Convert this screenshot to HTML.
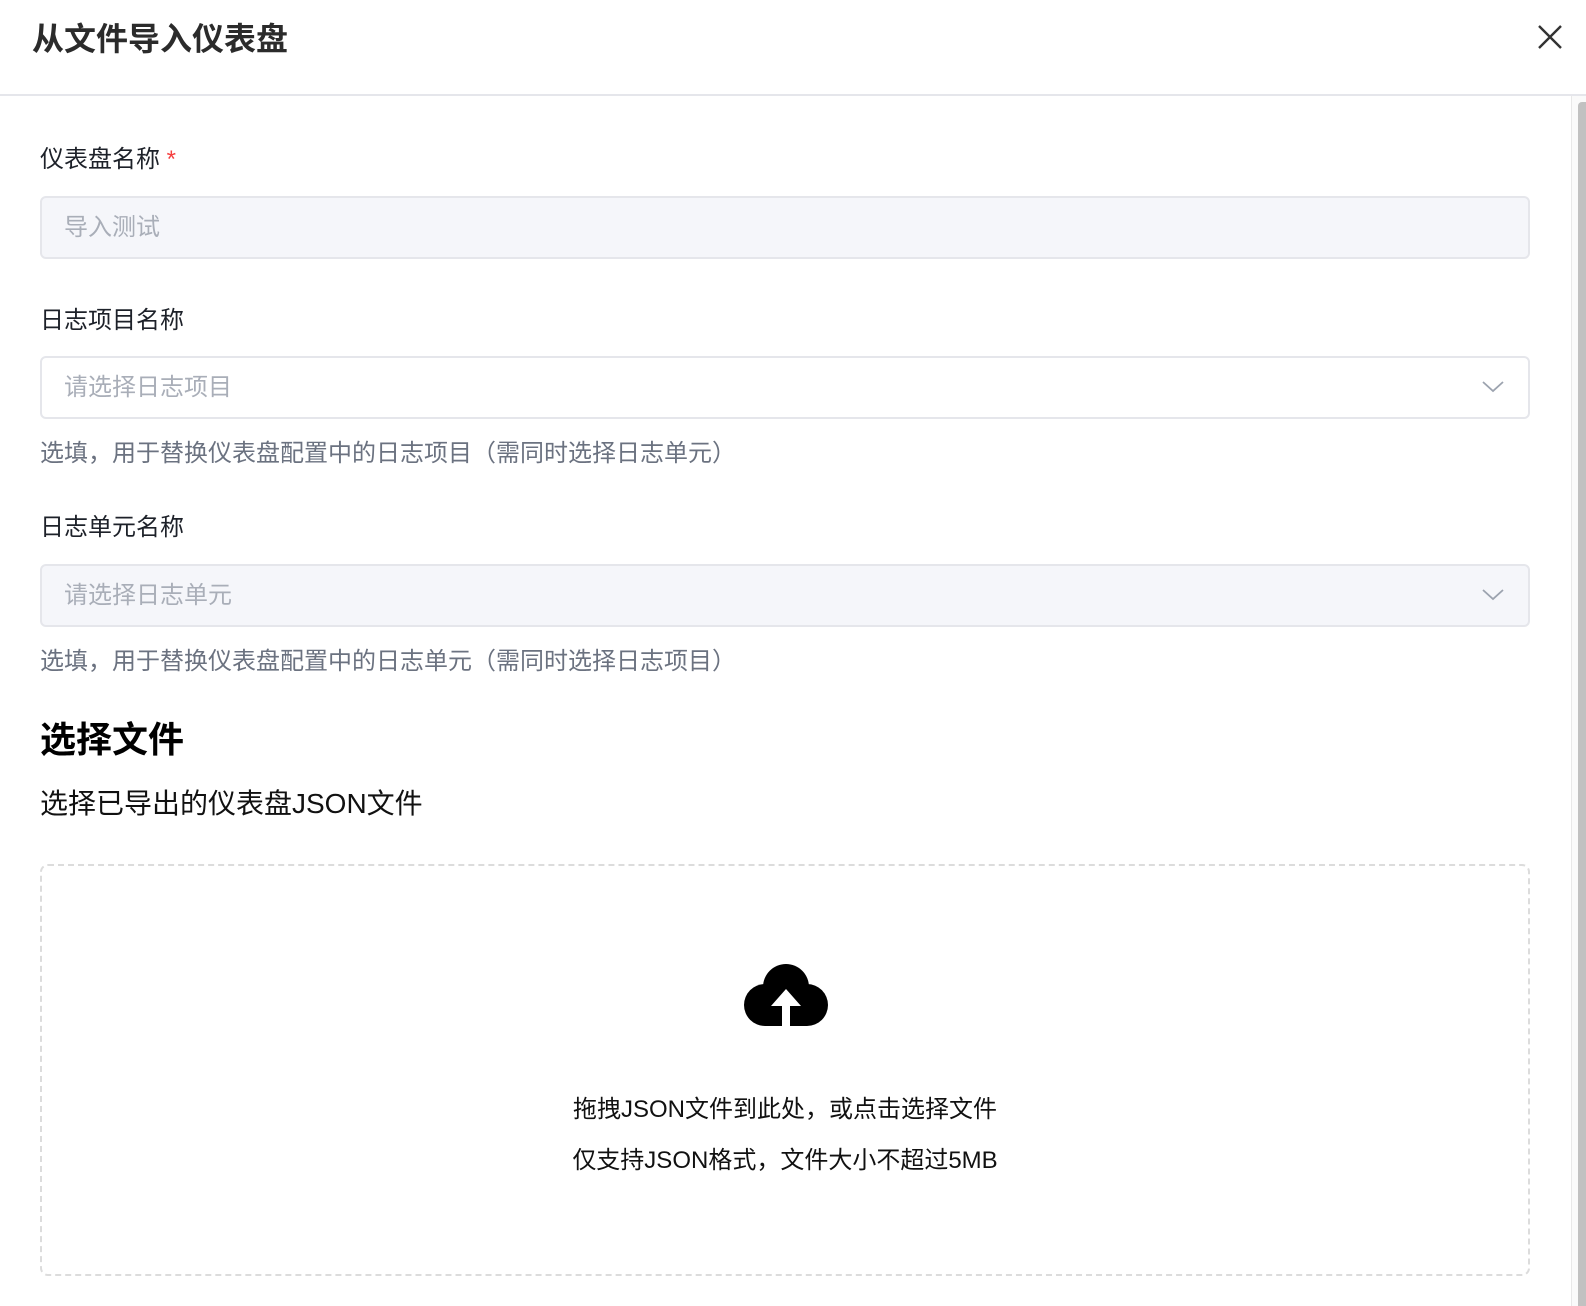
<!DOCTYPE html>
<html><head><meta charset="utf-8"><style>
*{box-sizing:border-box;margin:0;padding:0}
body{width:1586px;height:1306px;overflow:hidden;background:#fff;font-family:"Liberation Sans","Noto Sans CJK SC",sans-serif;position:relative;color:#1d2129}
.abs{position:absolute}
.title{left:32px;top:17px;font-size:32px;font-weight:bold;color:#2b2b2b;line-height:44px}
.hdr{left:0;top:94px;width:1586px;height:2px;background:#e5e6eb}
.sb{left:1571px;top:96px;width:15px;height:1210px;background:#fafafa;border-left:1px solid #e8e8e8}
.thumb{left:1578px;top:102px;width:8px;height:1204px;background:#c1c1c1;border-radius:4px 0 0 0}
.lbl{left:40px;font-size:24px;color:#1d2129;line-height:32px}
.inp{left:40px;width:1490px;height:63px;border:2px solid #e5e6eb;border-radius:6px;font-size:24px;color:#a9aeb8;padding-left:22px;line-height:59px}
.gray{background:#f5f6fa}
.help{left:40px;font-size:24px;color:#6b7280;line-height:32px}
.chev{right:24px;top:22px}
.ctr{left:0;width:1570px;text-align:center;font-size:24px;color:#111;line-height:32px}
</style></head><body>
<div class="abs title">从文件导入仪表盘</div>
<svg class="abs" style="left:1537px;top:24px" width="26" height="26" viewBox="0 0 26 26"><path d="M2 2L24 24M24 2L2 24" stroke="#333" stroke-width="2.4"/></svg>
<div class="abs hdr"></div>
<div class="abs sb"></div><div class="abs thumb"></div>

<div class="abs lbl" style="top:144px">仪表盘名称 <span style="color:#f53f3f">*</span></div>
<div class="abs inp gray" style="top:196px">导入测试</div>

<div class="abs lbl" style="top:305px">日志项目名称</div>
<div class="abs inp" style="top:356px">请选择日志项目<svg class="abs chev" width="22" height="14" viewBox="0 0 22 14"><path d="M1 2L11 11L21 2" fill="none" stroke="#9ca3af" stroke-width="1.8"/></svg></div>
<div class="abs help" style="top:438px">选填，用于替换仪表盘配置中的日志项目（需同时选择日志单元）</div>

<div class="abs lbl" style="top:512px">日志单元名称</div>
<div class="abs inp gray" style="top:564px">请选择日志单元<svg class="abs chev" width="22" height="14" viewBox="0 0 22 14"><path d="M1 2L11 11L21 2" fill="none" stroke="#9ca3af" stroke-width="1.8"/></svg></div>
<div class="abs help" style="top:646px">选填，用于替换仪表盘配置中的日志单元（需同时选择日志项目）</div>

<div class="abs" style="left:40px;top:716px;font-size:36px;font-weight:bold;color:#000;line-height:48px">选择文件</div>
<div class="abs" style="left:40px;top:785px;font-size:28px;color:#111;line-height:38px">选择已导出的仪表盘JSON文件</div>

<div class="abs" style="left:40px;top:864px;width:1490px;height:412px;border:2px dashed #dcdcdc;border-radius:8px"></div>
<svg class="abs" style="left:743px;top:961px" width="86" height="68" viewBox="0 0 86 68">
<g fill="#000"><circle cx="43" cy="26" r="23"/><circle cx="22" cy="44" r="21"/><circle cx="64" cy="44" r="21"/><rect x="22" y="42" width="42" height="23"/></g>
<path d="M43 28L58 45H47V68H39V45H28Z" fill="#fff"/>
</svg>
<div class="abs ctr" style="top:1094px">拖拽JSON文件到此处，或点击选择文件</div>
<div class="abs ctr" style="top:1145px">仅支持JSON格式，文件大小不超过5MB</div>
</body></html>
